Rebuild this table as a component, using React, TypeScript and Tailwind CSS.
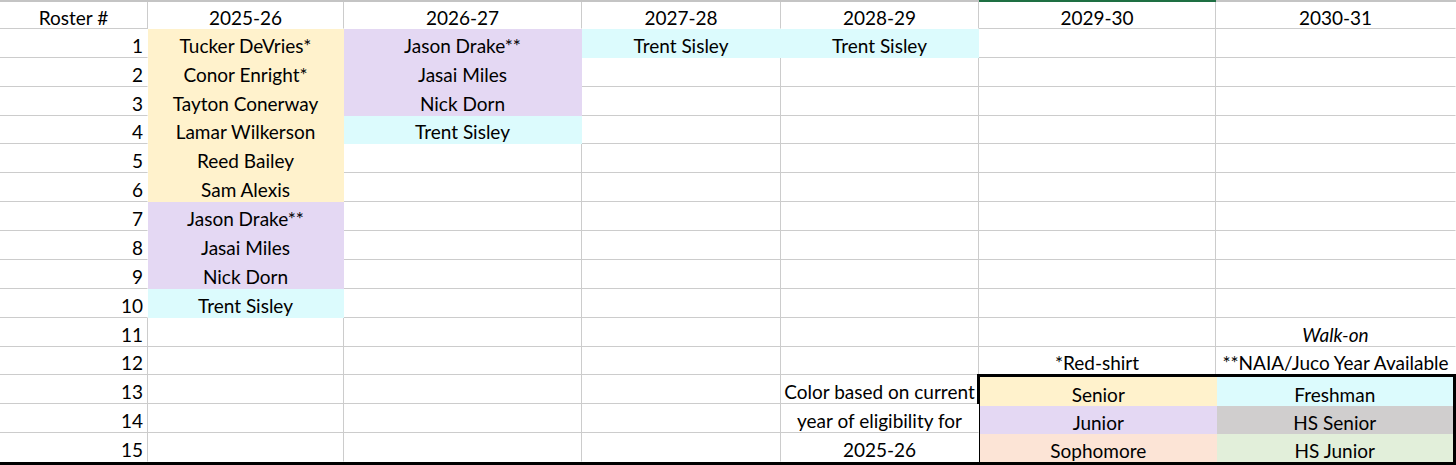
import React from 'react'

type Fill = 'sr' | 'jr' | 'so' | 'fr' | 'hss' | 'hsj'

type CellData = {
  text?: string
  fill?: Fill
  italic?: boolean
  num?: boolean
}

const fillBg: Record<Fill, string> = {
  sr: 'bg-[#fff2cc]',
  jr: 'bg-[#e4d8f3]',
  so: 'bg-[#fce4d6]',
  fr: 'bg-[#dcfbfd]',
  hss: 'bg-[#d0cece]',
  hsj: 'bg-[#e2efda]',
}

const headers = ['Roster #', '2025-26', '2026-27', '2027-28', '2028-29', '2029-30', '2030-31']

// player columns 2025-26 .. 2028-29, by roster row
const players: Record<number, [string, Fill][]> = {
  1: [['Tucker DeVries*', 'sr'], ['Conor Enright*', 'sr'], ['Tayton Conerway', 'sr'], ['Lamar Wilkerson', 'sr'], ['Reed Bailey', 'sr'], ['Sam Alexis', 'sr'], ['Jason Drake**', 'jr'], ['Jasai Miles', 'jr'], ['Nick Dorn', 'jr'], ['Trent Sisley', 'fr']],
  2: [['Jason Drake**', 'jr'], ['Jasai Miles', 'jr'], ['Nick Dorn', 'jr'], ['Trent Sisley', 'fr']],
  3: [['Trent Sisley', 'fr']],
  4: [['Trent Sisley', 'fr']],
}

const legend: [string, Fill][] = [
  ['Senior', 'sr'], ['Freshman', 'fr'],
  ['Junior', 'jr'], ['HS Senior', 'hss'],
  ['Sophomore', 'so'], ['HS Junior', 'hsj'],
]

// 16 rows (header + 15) x 7 cols; 'box' marks the legend area
function buildGrid(): (CellData | 'box')[][] {
  const g: (CellData | 'box')[][] = []
  g.push(headers.map((h) => ({ text: h })))
  for (let r = 1; r <= 15; r++) {
    const row: (CellData | 'box')[] = [{ text: String(r), num: true }]
    for (let c = 1; c <= 6; c++) {
      const p = players[c]?.[r - 1]
      row.push(p ? { text: p[0], fill: p[1] } : {})
    }
    g.push(row)
  }
  g[11][6] = { text: 'Walk-on', italic: true }
  g[12][5] = { text: '*Red-shirt' }
  g[12][6] = { text: '**NAIA/Juco Year Available' }
  g[13][4] = { text: 'Color based on current' }
  g[14][4] = { text: 'year of eligibility for' }
  g[15][4] = { text: '2025-26' }
  for (let r = 13; r <= 15; r++) { g[r][5] = 'box'; g[r][6] = 'box' }
  return g
}

const covered = (c: CellData | 'box' | undefined) => c === 'box' || !!(c && c.fill)

export default function App() {
  const grid = buildGrid()

  return (
    <div className="w-[1456px] h-[465px] bg-white text-black overflow-hidden" style={{ fontFamily: 'Lato, "Open Sans", sans-serif' }}>
      {/* sheet top edge, selected column in green */}
      <div className="grid grid-cols-[148px_196px_238px_199px_198px_237px_240px] h-[2px]">
        <div className="bg-[#c4c4c4]" />
        <div className="bg-[#c4c4c4]" />
        <div className="bg-[#c4c4c4]" />
        <div className="bg-[#c4c4c4]" />
        <div className="bg-[#c4c4c4]" />
        <div className="bg-[#1e6f43]" />
        <div className="bg-[#c4c4c4]" />
      </div>

      <div className="grid grid-cols-[148px_196px_238px_199px_198px_237px_240px] grid-rows-[27px_repeat(15,minmax(0,1fr))] h-[460px] border-b-[3px] border-black box-content">
        {grid.flatMap((row, r) =>
          row.map((cell, c) => {
            if (cell === 'box') {
              // legend box spans F13:G15, drawn once
              if (r !== 13 || c !== 5) return null
              return (
                <div key="box" className="col-span-2 row-span-3 -ml-[2px] -mt-[1px] border-t-[3px] border-x-[3px] border-black grid grid-cols-2 grid-rows-3">
                  {legend.map(([t, f]) => (
                    <div key={t} className={`${fillBg[f]} flex items-end justify-center leading-[20px] text-[19px] pb-px whitespace-nowrap`}>
                      {t}
                    </div>
                  ))}
                </div>
              )
            }
            const showRight = !cell.fill && c < 6 && !covered(row[c + 1])
            const showBottom = !cell.fill && !covered(grid[r + 1]?.[c]) && r < 15
            return (
              <div
                key={`${r}-${c}`}
                className={[
                  'flex items-end leading-[20px] text-[19px] whitespace-nowrap border-r border-b',
                  cell.fill ? fillBg[cell.fill] : 'bg-white',
                  showRight ? 'border-r-[#cccccc]' : 'border-r-transparent',
                  showBottom ? 'border-b-[#cccccc]' : 'border-b-transparent',
                  cell.num ? 'justify-end pr-[4px]' : 'justify-center',
                  r === 0 ? 'pb-0' : 'pb-px',
                  cell.italic ? 'italic' : '',
                ].join(' ')}
              >
                {cell.text}
              </div>
            )
          })
        )}
      </div>
    </div>
  )
}
